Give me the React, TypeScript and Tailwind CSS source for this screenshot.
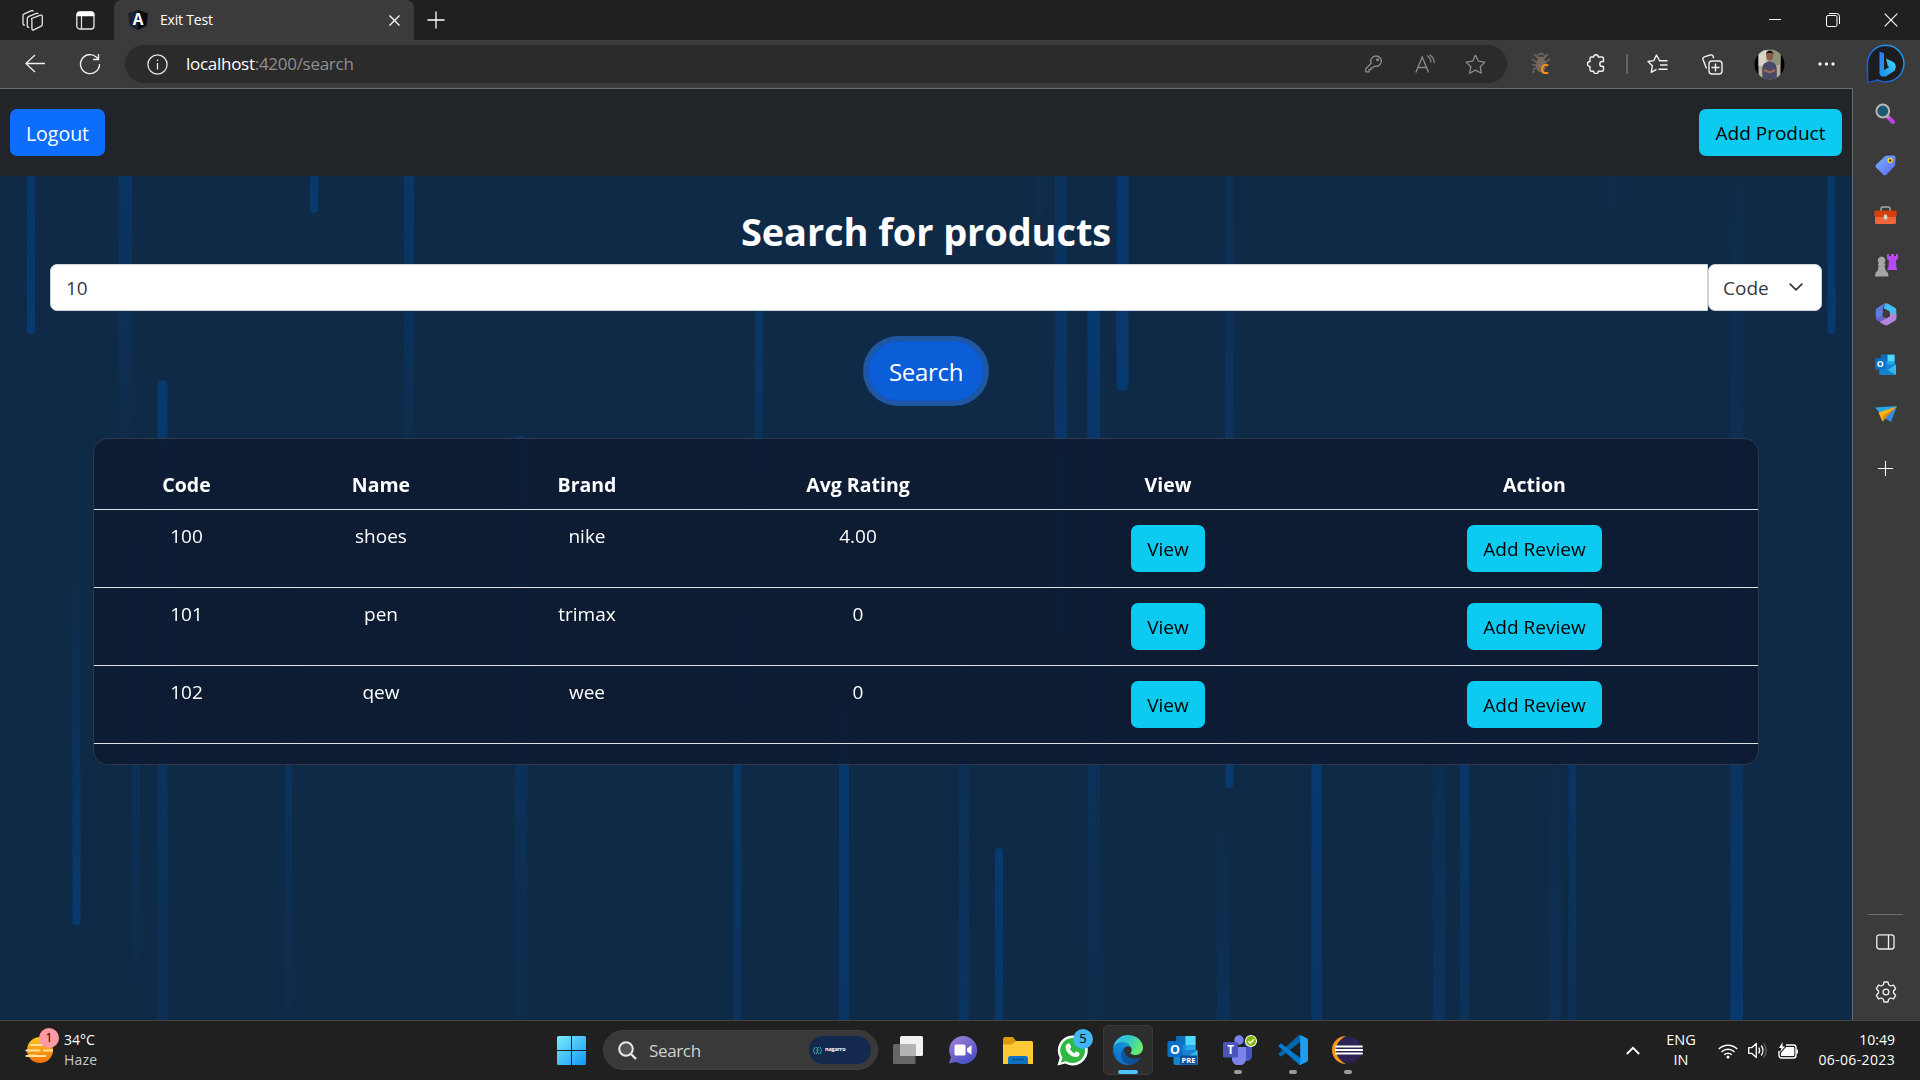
import React from "react";

type Stripe = { x: number; w: number; y1: number; y2: number; a: number; b: number };

/* Falling light streaks: a = opacity at the top end, b = opacity at the bottom end */
const stripes: Stripe[] = [
  { x: 27, w: 8, y1: 60, y2: 334, a: 0.6, b: 1 },
  { x: 118.5, w: 13.5, y1: 60, y2: 455, a: 1, b: 0 },
  { x: 310, w: 8, y1: 60, y2: 213, a: 0.7, b: 1 },
  { x: 404, w: 10, y1: 100, y2: 500, a: 1, b: 0 },
  { x: 157.5, w: 10, y1: 380, y2: 1090, a: 1, b: 0.2 },
  { x: 515, w: 12, y1: 436, y2: 1040, a: 0.9, b: 0.05 },
  { x: 755, w: 8, y1: 280, y2: 640, a: 0.9, b: 0 },
  { x: 1035, w: 9, y1: 100, y2: 260, a: 0.3, b: 0 },
  { x: 1054.5, w: 12.5, y1: 60, y2: 633, a: 0.35, b: 1 },
  { x: 1087.5, w: 12.5, y1: 285, y2: 1050, a: 1, b: 0.05 },
  { x: 1116.500, w: 12, y1: 40, y2: 391, a: 0.8, b: 1 },
  { x: 1225.500, w: 8, y1: 100, y2: 788, a: 0.2, b: 1 },
  { x: 1608, w: 10, y1: 100, y2: 215, a: 0.3, b: 0 },
  { x: 1730.500, w: 12.500, y1: 180, y2: 1100, a: 0.02, b: 1 },
  { x: 1827.500, w: 8, y1: 60, y2: 334, a: 0.6, b: 1 },
  { x: 72.500, w: 8, y1: 580, y2: 925, a: 0, b: 1 },
  { x: 132.500, w: 7.500, y1: 545, y2: 1000, a: 0.9, b: 0 },
  { x: 285, w: 7, y1: 545, y2: 1050, a: 1, b: 0 },
  { x: 733.500, w: 7.500, y1: 608, y2: 1200, a: 1, b: 0.3 },
  { x: 839, w: 10, y1: 705, y2: 1300, a: 1, b: 0.5 },
  { x: 959, w: 10, y1: 640, y2: 1060, a: 0.1, b: 0.7 },
  { x: 995, w: 8, y1: 848, y2: 1300, a: 1, b: 0.4 },
  { x: 1217, w: 12, y1: 820, y2: 1100, a: 0, b: 0.6 },
  { x: 1311.500, w: 10, y1: 752, y2: 1300, a: 1, b: 0.4 },
  { x: 1433, w: 12, y1: 700, y2: 1060, a: 0.15, b: 0.6 },
  { x: 1460, w: 9, y1: 640, y2: 1200, a: 0.95, b: 0.2 },
  { x: 1549.500, w: 12, y1: 750, y2: 1060, a: 0, b: 0.4 },
  { x: 1568.500, w: 7.500, y1: 560, y2: 1200, a: 0.9, b: 0.2 },
];

function Streaks() {
  return (
    <svg className="absolute inset-0 h-full w-full" viewBox="0 176 1852 844" preserveAspectRatio="none">
      <defs>
        {stripes.map((s, i) => (
          <linearGradient key={i} id={`st${i}`} x1="0" y1="0" x2="0" y2="1">
            <stop offset="0" stopColor="#073a70" stopOpacity={s.a} />
            <stop offset="1" stopColor="#073a70" stopOpacity={s.b} />
          </linearGradient>
        ))}
      </defs>
      {stripes.map((s, i) => (
        <rect key={i} x={s.x} y={s.y1} width={s.w} height={s.y2 - s.y1} rx={s.w / 2} fill={`url(#st${i})`} />
      ))}
    </svg>
  );
}

function TabStrip() {
  return (
    <div className="flex h-10 bg-[#202020]">
      <div className="flex w-[114px] items-center">
        <svg className="ml-[21px] h-[22px] w-[23px]" viewBox="0 0 23 22" fill="none" stroke="#e6e6e6" strokeWidth="1.3" strokeLinejoin="round">
          <path d="M10.5 9.5 19.5 6.2q1.8-.5 1.8 1.2v8.2q0 1-1 1.5l-7.6 3.7q-1.800.7-1.800-1.200v-8.200q0-1.200-.4-1.900z" />
          <path d="M8.200 18.200q-1.900.6-1.900-1.300V9.500q0-1.400 1.200-1.900l7.800-3.200q1.500-.5 1.700.8" />
          <path d="M4 15.900q-2 .6-2-1.300V6.500q0-1.200 1.200-1.700L10.500 1.700q1.500-.5 1.800.8" />
        </svg>
        <svg className="ml-8 h-[19px] w-[19px]" viewBox="0 0 19 19" fill="none">
          <rect x="0.8" y="0.8" width="17.2" height="17.2" rx="3" stroke="#e6e6e6" strokeWidth="1.3" />
          <path d="M.8 5.300V3.500a3 3 0 0 1 3-2.900h11.400a3 3 0 0 1 3 2.900v1.800z" fill="#fff" />
          <path d="M5.500 5v13" stroke="#e6e6e6" strokeWidth="1.2" />
        </svg>
      </div>
      <div className="flex w-[300px] items-center rounded-t-lg bg-[#3b3b3b]">
        <svg className="ml-[14px] h-5 w-5 overflow-visible" viewBox="0 0 20 20">
          <path d="M10 0 20 3.300 18.500 15.800 10 20z" fill="#050a14" />
          <path d="M10 0 0 3.300 1.500 15.800 10 20z" fill="#1c2130" />
          <text x="10" y="15.2" textAnchor="middle" fontSize="15.5" fontWeight="700" fill="#fff" fontFamily="Open Sans, sans-serif">A</text>
        </svg>
        <span className="ml-[12px] pb-[2px] text-[14px] tracking-[-0.2px] text-white">Exit Test</span>
        <svg className="mr-[14px] ml-auto h-[11px] w-[11px]" viewBox="0 0 11 11" stroke="#fff" strokeWidth="1.3">
          <path d="m.5.5 10 10m0-10-10 10" />
        </svg>
      </div>
      <svg className="mt-[11px] ml-[13px] h-[18px] w-[18px]" viewBox="0 0 18 18" stroke="#fff" strokeWidth="1.3">
        <path d="M9 .5v17M.5 9h17" />
      </svg>
      <div className="mr-[22px] ml-auto flex items-center gap-[44px] pb-[1px]">
        <svg className="h-[14px] w-[14px]" viewBox="0 0 14 14" stroke="#fff"><path d="M1 6.500h12" /></svg>
        <svg className="h-[14px] w-[14px]" viewBox="0 0 14 14" stroke="#fff" fill="none">
          <rect x=".5" y="2.5" width="10.5" height="11" rx="1.5" />
          <path d="M3 .5h7.500a3 3 0 0 1 3 3V11" />
        </svg>
        <svg className="h-[14px] w-[14px]" viewBox="0 0 14 14" stroke="#fff" strokeWidth="1.1"><path d="m.7.7 12.600 12.600m0-12.600L.7 13.300" /></svg>
      </div>
    </div>
  );
}

function BingIcon() {
  return (
    <svg className="h-[40px] w-[40px]" viewBox="0 0 40 40">
      <defs>
        <linearGradient id="bRing" x1="1" y1="0" x2="0" y2="1">
          <stop offset="0" stopColor="#1fa4f5" /><stop offset="1" stopColor="#1550d8" />
        </linearGradient>
        <linearGradient id="bB" x1="0" y1="0" x2="0" y2="1">
          <stop offset="0" stopColor="#2f7bf3" /><stop offset="1" stopColor="#2196ee" />
        </linearGradient>
        <linearGradient id="bC" x1="0" y1="1" x2="1" y2="0">
          <stop offset="0" stopColor="#1a86ee" /><stop offset="1" stopColor="#43dcf0" />
        </linearGradient>
      </defs>
      <path d="M20 1.200a18.300 18.300 0 1 1-8.500 34.700c-3.500 1.500-6.500 2.300-9.800 2.300L1.400 20A18.600 18.600 0 0 1 20 1.200z" fill="#1d1d1f" stroke="url(#bRing)" strokeWidth="1.5" />
      <path d="M13.500 7.500 18 9.300v17.200l-4.500 3.200z" fill="url(#bB)" />
      <path d="M20 14.500l6.700 3.200a5.500 5.500 0 0 1 3 5c0 2.500-1 4.200-3 5.300l-6.700 4.200c-3.500 1.400-6.500-.3-6.500-3.500l9.800-5.700-1.500-.8z" fill="url(#bC)" />
    </svg>
  );
}

function Toolbar() {
  return (
    <div className="flex h-12 items-center bg-[#3b3b3b]">
      <svg className="ml-[25px] h-[20px] w-[20px]" viewBox="0 0 20 20" fill="none" stroke="#f0f0f0" strokeWidth="1.3">
        <path d="M10 1 .9 9.500 10 18M1 9.500h19" />
      </svg>
      <svg className="ml-[34px] h-[22px] w-[22px]" viewBox="0 0 22 22" fill="none" stroke="#f0f0f0" strokeWidth="1.4">
        <path d="M20.500 11a9.500 9.500 0 1 1-3-6.800L19.500 6.300M19.500 1v5.500H14" />
      </svg>
      <div className="ml-6 flex h-[38px] w-[1382px] items-center rounded-full bg-[#2b2b2b]">
        <svg className="ml-[22px] h-[21px] w-[21px]" viewBox="0 0 21 21" fill="none" stroke="#e6e6e6" strokeWidth="1.3">
          <circle cx="10.5" cy="10.5" r="9.600" /><path d="M10.500 9v6.500M10.500 5.500v1.600" />
        </svg>
        <span className="ml-[18px] text-[17px] tracking-[-0.28px] whitespace-nowrap text-[#8f8f8f]"><span className="text-white">localhost</span>:4200/search</span>
        <svg className="ml-auto h-[18px] w-[17px]" viewBox="0 0 17 18" fill="none" stroke="#8c8c8c" strokeWidth="1.3" strokeLinejoin="round">
          <path d="M11 1a5.200 5.200 0 1 1-1.600 10.100L7.700 12.800H6v1.900H4v2.200H.8v-3.100l5.400-5.500A5.200 5.200 0 0 1 11 1z" /><circle cx="12.6" cy="4.8" r=".9" />
        </svg>
        <svg className="ml-[33px] h-[20px] w-[20px]" viewBox="0 0 20 20" fill="none" stroke="#8c8c8c" strokeWidth="1.3">
          <path d="M.8 18.500 7.200 3l6.400 15.500M3 13.500h8.500M12 1.500q4 2.500 4 7M14.500.7q4.800 3 4.800 8.300" />
        </svg>
        <svg className="mr-[21px] ml-[30px] h-[21px] w-[21px]" viewBox="0 0 21 21" fill="none" stroke="#8c8c8c" strokeWidth="1.3" strokeLinejoin="round">
          <path d="m10.500 1.300 2.900 5.900 6.500.9-4.700 4.600 1.100 6.500-5.800-3.100-5.800 3.100 1.100-6.500L1.100 8.100l6.500-.9z" />
        </svg>
      </div>
      <svg className="ml-[24px] h-[22px] w-[20px] overflow-visible" viewBox="0 0 20 22" fill="none" stroke="#75695e" strokeWidth="1.4">
        <path d="M6 4.500a4 4 0 0 1 8 0zM3 1l3 3M17 1l-3 3M1 6l4 3h10l4-3M1 12h4M2 20l1-4 3-2" />
        <ellipse cx="10" cy="12" rx="5" ry="7.500" fill="#75695e" stroke="none" />
        <text x="9" y="21" fontSize="14" fontWeight="700" fill="#f7941d" stroke="#3b3b3b" strokeWidth=".5" paintOrder="stroke" fontFamily="Open Sans, sans-serif">C</text>
      </svg>
      <svg className="ml-[35px] h-[20px] w-[20px]" viewBox="0 0 20 20" fill="none" stroke="#f0f0f0" strokeWidth="1.4" strokeLinejoin="round">
        <path d="M4 4.500q0-1.500 1.500-1.500h2.200a2.300 2.300 0 0 1 4.600 0H16q1.500 0 1.500 1.500v3h-1.200a2.500 2.500 0 0 0 0 5h1.200v3.300q0 1.500-1.500 1.500h-3.700a2.300 2.300 0 0 1-4.600 0H5.500Q4 17.300 4 15.800v-3.300a2.500 2.500 0 0 1 0-5z" />
      </svg>
      <div className="ml-[20px] h-5 w-[2px] bg-[#666]" />
      <svg className="ml-[19px] h-[20px] w-[21px]" viewBox="0 0 21 20" fill="none" stroke="#f0f0f0" strokeWidth="1.4" strokeLinejoin="round">
        <path d="M13 6.500h-.5L9.500 1 6.800 6.600 1 7.500l4.300 4.300-1 6.500 5.200-2.900M12 6.800h8.500M13 11h7.500M11.500 15.300h9" />
      </svg>
      <svg className="ml-[34px] h-[21px] w-[21px]" viewBox="0 0 21 21" fill="none" stroke="#f0f0f0" strokeWidth="1.4">
        <path d="M4.500 14.500 1 5.500q-.5-2 1.300-2.700L8 1q2-.5 3 1l.7 2.200" /><rect x="7" y="7" width="13" height="13" rx="3" fill="#3b3b3b" /><path d="M13.500 9.500v8M9.500 13.500h8" />
      </svg>
      <svg className="ml-[31px] h-[31px] w-[31px]" viewBox="0 0 31 31">
        <clipPath id="av"><circle cx="15.5" cy="15.5" r="15" /></clipPath>
        <g clipPath="url(#av)">
          <path d="M0 0h31v31H0z" fill="#000" /><path d="M4.500 0h22v31h-22z" fill="#b9ad9c" /><path d="M17 0h9.500v16H17z" fill="#8e9379" /><path d="M4.500 0H12v17H4.500z" fill="#d9d2c6" />
          <path d="M8.500 31c0-7-1.500-15 2.500-17l4.500-2 4.500 2c4 2 2.500 10 3 17z" fill="#4b4a66" />
          <ellipse cx="15.7" cy="7" rx="3.300" ry="4.600" fill="#8d5c44" /><path d="M12 6c0-6 7.500-6 7.500 0l-1.500-2h-4.500z" fill="#17120f" />
          <path d="m10 21 6 2.500 5-2.500" stroke="#a06c50" strokeWidth="2" fill="none" />
        </g>
      </svg>
      <svg className="ml-[33px] h-[4px] w-[17px]" viewBox="0 0 17 4" fill="#f0f0f0"><circle cx="2" cy="2" r="1.7" /><circle cx="8.5" cy="2" r="1.7" /><circle cx="15" cy="2" r="1.7" /></svg>
      <div className="ml-[31px]"><BingIcon /></div>
    </div>
  );
}

const products = [
  { code: "100", name: "shoes", brand: "nike", rating: "4.00" },
  { code: "101", name: "pen", brand: "trimax", rating: "0" },
  { code: "102", name: "qew", brand: "wee", rating: "0" },
];

const gridCols = "grid grid-cols-[185px_204px_208px_334px_286px_447px] text-center";
const infoButton = "h-[47px] rounded-[7px] bg-[#0dcaf0] pt-[2px] text-[19px] text-black";

function Page() {
  return (
    <div className="flex w-[1852px] flex-col border-t border-[#6b6b6b]">
      <nav className="flex h-[87px] items-center justify-between bg-[#212529] px-[10px]">
        <button className="h-[47px] w-[95px] rounded-[7px] bg-[#0d6efd] pt-[2px] text-[19.5px] text-white">Logout</button>
        <button className={`${infoButton} w-[143px]`}>Add Product</button>
      </nav>
      <main className="relative h-[844px] overflow-hidden bg-[#0f2a47]">
        <Streaks />
        <div className="relative flex flex-col items-center">
          <h1 className="mt-[31px] h-12 text-[38px] leading-[48px] font-bold tracking-[-0.1px] text-white">Search for products</h1>
          <div className="mt-[9px] flex w-[1772px] self-start pl-[50px]">
            <div className="flex h-[47px] w-[1658px] shrink-0 items-center rounded-l-[7px] border border-[#ced4da] bg-white pt-[2px] pl-[15px] text-[19px] text-[#343a40]">10</div>
            <div className="flex h-[47px] w-[114px] shrink-0 items-center rounded-[7px] border border-[#ced4da] bg-white pl-[14px] text-[19px] text-[#343a40]">
              <span className="pt-[2px]">Code</span>
              <svg className="mb-[1px] ml-[20px] h-[8px] w-[14px]" viewBox="0 0 14 8" fill="none" stroke="#343a40" strokeWidth="1.8" strokeLinecap="round" strokeLinejoin="round"><path d="m1.200 1.200 5.800 5.600 5.800-5.600" /></svg>
            </div>
          </div>
          <button className="mt-[30px] h-[60px] w-[116px] rounded-full border border-[#0a58ca] bg-[#0b5ed7] pt-[1px] text-[24px] tracking-[-0.3px] text-white ring-[5px] ring-[#3184fd]/50">Search</button>
          <section className="mt-[37px] h-[327px] w-[1666px] rounded-[15px] border border-white/[0.125] bg-[#0e1a30]/85 text-[19px] text-white backdrop-blur-[5px]">
            <div className={`${gridCols} h-[71px] items-end border-b border-[#dee2e6] pb-[10px] text-[19.5px] font-bold`}>
              <span>Code</span><span>Name</span><span>Brand</span><span>Avg Rating</span><span>View</span><span>Action</span>
            </div>
            {products.map((p) => (
              <div key={p.code} className={`${gridCols} h-[78px] items-start border-b border-[#dee2e6] pt-[12px]`}>
                <span>{p.code}</span><span>{p.name}</span><span>{p.brand}</span><span>{p.rating}</span>
                <span className="pt-[3px]"><button className={`${infoButton} w-[74px]`}>View</button></span>
                <span className="pt-[3px]"><button className={`${infoButton} w-[135px]`}>Add Review</button></span>
              </div>
            ))}
          </section>
        </div>
      </main>
    </div>
  );
}

function OutlookIcon({ pre }: { pre?: boolean }) {
  return (
    <svg className={pre ? "h-[30px] w-[31px]" : "h-[21px] w-[21px]"} viewBox="0 0 30 30">
      <path d="M9 1h18q1 0 1 1v24H9z" fill="#1490df" /><path d="M9 1h9v9H9z" fill="#0f6cbd" /><path d="M18 1h10v9H18z" fill="#50d9ff" /><path d="M18 10h10v8H18z" fill="#28a8ea" />
      <path d="M6 15h24v13q0 2-2 2H8q-2 0-2-2z" fill="#1683d0" /><path d="m30 15-12 8 12 7z" fill="#35b8f1" />
      <rect x="0" y="6" width="15" height="16" rx="1.5" fill="#0a6fc7" />
      <text x="7.5" y="18.7" textAnchor="middle" fontSize="12.5" fontWeight="700" fill="#fff" fontFamily="Open Sans, sans-serif">O</text>
      {pre && <><rect x="12.5" y="20.5" width="17" height="9" fill="#0a4f97" /><text x="21" y="28" textAnchor="middle" fontSize="7.5" fontWeight="700" fill="#fff" fontFamily="Open Sans, sans-serif">PRE</text></>}
    </svg>
  );
}

function Sidebar() {
  return (
    <aside className="flex w-[68px] flex-col items-center border-l border-[#6b6b6b] bg-[#3b3b3b] pr-[2px]">
      <svg className="mt-[15px] h-[22px] w-[21px]" viewBox="0 0 21 22">
        <path d="m13 14 5 5" stroke="#c23df0" strokeWidth="4" strokeLinecap="round" /><path d="m12 13 2 2" stroke="#999" strokeWidth="2.5" />
        <circle cx="7.8" cy="8" r="6.400" fill="#1b5875" stroke="#b8b5b2" strokeWidth="2" />
      </svg>
      <svg className="mt-[30px] h-[21px] w-[21px]" viewBox="0 0 21 21">
        <defs><linearGradient id="tg" x1="0" y1="0" x2="1" y2="1"><stop offset="0" stopColor="#76b7ff" /><stop offset="1" stopColor="#5c63f5" /></linearGradient></defs>
        <path d="m11.500.7 7-.2q2 0 2 2l-.3 7q0 1-.8 1.800l-8.200 8.500q-1.400 1.200-2.800 0L1 12.500q-1-1.400 0-2.800L10 1.300q.7-.6 1.500-.6z" fill="url(#tg)" />
        <circle cx="15.2" cy="5.6" r="2" fill="#333" stroke="#f5cf1b" strokeWidth="1.5" />
      </svg>
      <svg className="mt-[30px] h-[18px] w-[23px]" viewBox="0 0 23 18">
        <path d="M7 5V2.500q0-1.500 1.500-1.500h6Q16 1 16 2.500V5" fill="none" stroke="#aaa" strokeWidth="1.5" />
        <rect x="1" y="9" width="21" height="9" rx="1.5" fill="#f0653a" /><rect x=".3" y="4.5" width="22.4" height="6.500" rx="1.3" fill="#d3400f" /><rect x="9.7" y="8.5" width="3.6" height="5" rx="1.5" fill="#d5cfcb" />
      </svg>
      <svg className="mt-[29px] h-[24px] w-[24px]" viewBox="0 0 24 24">
        <path d="M13 1h2v2h2V1h3v2h2V1h2v5l-2 1.500.3 6.500 1.200 3H13l1.500-3 .3-6.500L13 6z" fill="#b44af3" />
        <path d="M7.500 3.500a4 4 0 0 1 2.800 6.800l1.200 1-.8 1.500c0 3 .8 5 3.300 7.200l.5 3.500H1l.5-3.500c2.500-2.200 3-4.200 3-7.200L3.700 11.300l1.200-1a4 4 0 0 1 2.600-6.800z" fill="#a5a5a5" />
      </svg>
      <svg className="mt-[26px] h-[23px] w-[22px]" viewBox="0 0 22 23">
        <path d="M10.500.3Q12 0 13.500 1L20 4.700q1.300.8 1.300 2.300v8.500l-6.500-3.500V8.500L8.500 5z" fill="#45bdf0" />
        <path d="M11 .2 8.800 2.500q-1 1-1 2.500v8.500L2.500 17.500Q.8 16.500.8 14.800V7.500Q.8 5.800 2.200 5L9 .8q1-.7 2-.6z" fill="#5a7ee0" />
        <path d="m7.800 12.500 4 2.500-5.500 4.500-3.800-2Q.8 16.500.8 14.800V13q2 2 4.500 1z" fill="#6a5fc4" />
        <path d="M21.300 11v4.500q0 1.500-1.300 2.300L12.700 22q-1.500.8-3 0l-5-2.800 10.100-6V9.500q3.500 2.800 6.500 1.500z" fill="#b683de" />
        <path d="m11 8 3.800 2.200v3L11 15.300l-3.200-1.800V9.800z" fill="#3b3b3b" />
      </svg>
      <div className="mt-[28px]"><OutlookIcon /></div>
      <svg className="mt-[31px] h-[17px] w-[22px]" viewBox="0 0 22 17">
        <path d="M0 1.500 22 0 9 8 5 7z" fill="#27a6e8" /><path d="m3.500 6.500 18.500-6L7.500 15.500z" fill="#f9b715" /><path d="M22 .3 16 16l-6.500-4z" fill="#2f8bea" /><path d="M22 .3 7.500 15.500 8 10z" fill="#dd8b10" />
      </svg>
      <svg className="mt-[38px] h-[15px] w-[15px]" viewBox="0 0 15 15" stroke="#fff" strokeWidth="1.1"><path d="M7.500 0v15M0 7.500h15" /></svg>
      <div className="mt-auto h-px w-[35px] bg-[#6e6e6e]" />
      <svg className="mt-[19px] h-[16px] w-[19px]" viewBox="0 0 19 16" fill="none" stroke="#f0f0f0" strokeWidth="1.3"><rect x=".8" y=".8" width="17.2" height="14.2" rx="2.5" /><path d="M12.500 1v14" /></svg>
      <svg className="mt-[31px] mb-[17px] h-[22px] w-[22px]" viewBox="0 0 22 22" fill="none" stroke="#f0f0f0" strokeWidth="1.3" strokeLinejoin="round">
        <path d="M9 1h4l.7 2.800 2 1.200 2.800-.9 2.100 3.600L18.500 10v2l2.100 2.300-2.100 3.600-2.800-.9-2 1.200L13 21H9l-.7-2.800-2-1.200-2.800.9-2.100-3.600L3.500 12v-2L1.400 7.700l2.100-3.600 2.800.9 2-1.200z" /><circle cx="11" cy="11" r="2.900" />
      </svg>
    </aside>
  );
}

function EdgeIcon() {
  return (
    <svg className="h-[30px] w-[30px]" viewBox="0 0 256 256">
      <defs>
        <linearGradient id="e1" x1="0" y1="0" x2="1" y2="0"><stop offset="0" stopColor="#0c59a4" /><stop offset="1" stopColor="#114a8b" /></linearGradient>
        <linearGradient id="e2" x1="1" y1="0" x2="0.3" y2="1"><stop offset="0" stopColor="#1b9de2" /><stop offset="1" stopColor="#0a6cc4" /></linearGradient>
        <linearGradient id="e3" x1="0" y1="0" x2="1" y2="0.4"><stop offset="0" stopColor="#35c1f1" /><stop offset="0.5" stopColor="#2fc6cf" /><stop offset="1" stopColor="#66eb6e" /></linearGradient>
      </defs>
      <path fill="url(#e1)" d="M231.100 190.500c-3.400 1.800-6.900 3.400-10.500 4.700a101.900 101.900 0 0 1-35.900 6.500c-47.300 0-88.500-32.500-88.500-74.300a31.500 31.500 0 0 1 16.400-27.300c-42.800 1.800-53.800 46.400-53.800 72.500 0 74 68.100 81.400 82.800 81.400 7.900 0 19.800-2.300 27-4.600l1.300-.4a128.300 128.300 0 0 0 66.600-52.800 4 4 0 0 0-5.400-5.700z" />
      <path fill="url(#e2)" d="M105.700 241.400a79.200 79.200 0 0 1-22.700-21.300 80.700 80.700 0 0 1 29.500-120c3.200-1.500 8.500-4.100 15.600-4a32.400 32.400 0 0 1 25.700 13 31.900 31.900 0 0 1 6.300 18.700c0-.2 24.500-79.600-80-79.600-43.900 0-80 41.600-80 78.200a130.200 130.200 0 0 0 12.100 56 128 128 0 0 0 156.400 67 75.500 75.500 0 0 1-62.800-8z" />
      <path fill="url(#e3)" d="M152.300 148.900c-.8 1-3.300 2.500-3.300 5.700 0 2.600 1.700 5.200 4.800 7.300 14.400 10 41.500 8.700 41.500 8.700a59.600 59.600 0 0 0 30.300-8.300 61.400 61.400 0 0 0 30.400-52.900c.3-22.400-8-37.300-11.300-43.900C223.600 23.900 177.700 0 127.700 0A128 128 0 0 0 0 126.200c.5-36.500 36.800-66 80-66 3.500 0 23.500.3 42 10.100 16.300 8.600 24.900 18.900 30.800 29.200 6.200 10.700 7.300 24.100 7.300 29.500 0 5.300-2.700 13.300-7.800 19.900z" />
    </svg>
  );
}

function AppSlot({ children, mark }: { children: React.ReactNode; mark?: "active" | "open" }) {
  return (
    <div className="flex w-[55px] justify-center">
      <div className={`relative mt-[4px] flex h-[50px] w-[50px] items-center justify-center rounded-[5px] ${mark === "active" ? "border border-[#3a3a3a] bg-[#2e2e2e]" : ""}`}>
        {children}
        {mark && <div className={`absolute left-1/2 h-[4px] -translate-x-1/2 rounded-full ${mark === "active" ? "bottom-0 w-5 bg-[#4cc2ff]" : "bottom-px w-2 bg-[#9a9a9a]"}`} />}
      </div>
    </div>
  );
}

function Taskbar() {
  return (
    <footer className="flex h-[60px] border-t border-[#444646] bg-[#202020]">
      <div className="flex w-[557px] items-center">
        <div className="relative ml-[24px] h-[42px] w-[36px]">
          <svg className="absolute top-[6px] left-0 h-[28px] w-[29px]" viewBox="0 0 29 28">
            <defs><linearGradient id="sun" x1="0" y1="0" x2="0" y2="1"><stop offset="0" stopColor="#fcc81a" /><stop offset="1" stopColor="#f0720c" /></linearGradient></defs>
            <circle cx="16" cy="14" r="13" fill="url(#sun)" />
            <path d="M7 9h12M22 9h4M2.500 14.500h13M20 14.500h8M6 19.500h6M2.500 20h19" stroke="#fbdf9f" strokeWidth="2.2" strokeLinecap="round" />
          </svg>
          <span className="absolute -top-[2px] left-[15px] flex h-5 w-5 items-center justify-center rounded-full bg-[#ff99a4] text-[12px] text-black">1</span>
        </div>
        <div className="ml-[4px] flex flex-col pb-[2px] text-[14px] leading-[20px]"><span className="text-white">34°C</span><span className="tracking-[0.2px] text-[#c8c8c8]">Haze</span></div>
      </div>
      <svg className="mt-[15px] h-[30px] w-[30px]" viewBox="0 0 30 30">
        <defs><linearGradient id="win" gradientUnits="userSpaceOnUse" x1="0" y1="0" x2="30" y2="30"><stop offset="0" stopColor="#7cebff" /><stop offset="1" stopColor="#0c95f5" /></linearGradient></defs>
        <path d="M1.500 0H14v14H0V1.500Q0 0 1.500 0zM15 0h12.500Q29 0 29 1.500V14H15zM0 15h14v14H1.500Q0 29 0 27.500zM15 15h14v12.500q0 1.500-1.500 1.500H15z" fill="url(#win)" />
      </svg>
      <div className="mt-[9px] ml-[16px] flex h-[40px] w-[275px] items-center rounded-full border border-[#404040] bg-[#393939]">
        <svg className="ml-[14px] h-[19px] w-[19px]" viewBox="0 0 19 19" fill="none" stroke="#e8e8e8" strokeWidth="2"><circle cx="8" cy="8" r="6.800" fill="#555" /><path d="m13 13 5 5" strokeWidth="2.4" /></svg>
        <span className="ml-[12px] pt-[1px] text-[17px] tracking-[-0.35px] text-[#d0d0d0]">Search</span>
        <div className="mr-[6px] ml-auto flex h-7 w-[62px] items-center rounded-full bg-[#13294d] pl-[3px]">
          <svg className="h-[9px] w-[11px]" viewBox="0 0 11 9" fill="none" stroke="#3fae9d" strokeWidth="1"><path d="M3 1Q0 4.500 3 8M8 1q3 3.500 0 7M4 1q4 3 0 7M7 1Q3 4 7 8" /></svg>
          <span className="ml-[2px] text-[5.5px] leading-none font-bold tracking-[-0.2px] text-white">nagarro</span>
        </div>
      </div>
      <div className="ml-[2px] flex">
        <AppSlot>
          <svg className="h-[28px] w-[30px]" viewBox="0 0 30 28"><rect x="7" y="0" width="23" height="20" rx="1.5" fill="#f2f2f2" /><rect x="0" y="8" width="22.5" height="20" rx="1.5" fill="#6e6e6e" fillOpacity=".9" /><path d="M7 8h15.500v12H7z" fill="#b4b4b4" /></svg>
        </AppSlot>
        <AppSlot>
          <svg className="h-[28px] w-[28px]" viewBox="0 0 28 28">
            <defs><linearGradient id="chat" x1="0" y1="0" x2="0.6" y2="1"><stop offset="0" stopColor="#a582d4" /><stop offset="1" stopColor="#4a50c8" /></linearGradient></defs>
            <path d="M14 0a14 14 0 1 1-7 26L0 27.500 2 21A14 14 0 0 1 14 0z" fill="url(#chat)" /><rect x="5.500" y="8.500" width="11" height="11" rx="1.5" fill="#fff" /><path d="m18 12.500 4.500-3.300v9.600L18 15.500z" fill="#fff" />
          </svg>
        </AppSlot>
        <AppSlot>
          <svg className="h-[27px] w-[30px]" viewBox="0 0 30 27"><path d="M0 2q0-2 2-2h8l3 4h-2v5H0z" fill="#dc9a08" /><path d="M12 4h16.500Q30 4 30 5.500V27H0V7.500h9z" fill="#fdc935" /><path d="M5 27v-5.500Q5 19 7.500 19h15q2.500 0 2.500 2.500V27z" fill="#0d74c4" /><path d="M9 22.500h12" stroke="#0a4f90" strokeWidth="1.5" /></svg>
        </AppSlot>
        <AppSlot>
          <div className="relative flex h-[31px] w-[31px] items-center justify-center text-white">
            <svg className="absolute inset-0 h-[31px] w-[31px]" viewBox="0 0 31 31"><path d="M15.500.5a15 15 0 1 1-7.200 28L.5 30.500l2.200-7.700A15 15 0 0 1 15.500.5z" fill="#fff" /><path d="M15.500 3a12.500 12.500 0 1 1-6.400 23.200L4 27.500l1.400-5A12.500 12.500 0 0 1 15.500 3z" fill="#2fb943" />
              <path d="M10.800 8.500h2l1.400 3.500-1.200 1.900c1 2 2.500 3.300 4.500 4.100l1.700-1.700 3.300 1.600c.5 3-2 4.200-4 4.100-5-.5-9.500-5-9.900-9.300 0-1.700.8-3.500 2.200-4.200z" fill="#fff" /></svg>
            <span className="absolute -top-[6px] left-[16px] flex h-[20px] w-[20px] items-center justify-center rounded-full bg-[#3fb6f5] text-[13px] text-black">5</span>
          </div>
        </AppSlot>
        <AppSlot mark="active"><EdgeIcon /></AppSlot>
        <AppSlot><OutlookIcon pre /></AppSlot>
        <AppSlot mark="open">
          <svg className="h-[30px] w-[34px] translate-x-[2px]" viewBox="0 0 34 30">
            <circle cx="25" cy="8" r="3.500" fill="#5059c9" /><path d="M20 12h9v9a5 5 0 0 1-9 3z" fill="#4a52bd" />
            <circle cx="16" cy="5" r="4.700" fill="#7b83eb" /><path d="M9 12h14v10a7 7 0 0 1-14 3z" fill="#7b83eb" />
            <rect x="0" y="7" width="15" height="15.500" rx="1.5" fill="#4b53bc" /><text x="7.5" y="19" textAnchor="middle" fontSize="11.5" fontWeight="700" fill="#fff" fontFamily="Open Sans, sans-serif">T</text>
            <circle cx="28" cy="6" r="6" fill="#fff" /><circle cx="28" cy="6" r="5" fill="#7fba00" /><path d="m25.300 6 2 2.100 3.500-3.900" stroke="#fff" strokeWidth="1.5" fill="none" />
          </svg>
        </AppSlot>
        <AppSlot mark="open">
          <svg className="h-[30px] w-[30px]" viewBox="0 0 100 100">
            <path d="M96 11 75 1q-4-1-7 1L2 62q-2 2 0 4l6 5q2 1.500 4 0L91 11q5-2 5 3z" fill="#0065a9" /><path d="M96 89 75 99q-4 1-7-2L2 38q-2-2 0-4l6-5q2-1.500 4 0l79 60q5 2 5-3z" fill="#007acc" /><path d="M75 99q-4 1-7-2 4 3 6-2V5q-2-5-6-2 3-3 7-2l21 10q4 2 4 6v66q0 4-4 6z" fill="#1f9cf0" />
          </svg>
        </AppSlot>
        <AppSlot mark="open">
          <svg className="h-[28px] w-[31px]" viewBox="0 0 31 28">
            <path d="M14 0A14 14 0 0 0 14 28 15.500 15.500 0 0 1 14 0z" fill="#f7941e" /><circle cx="17" cy="14" r="13" fill="#2c2255" />
            <path d="M3.300 10.500h27.400M3 14h28M3.300 17.500h27.400" stroke="#fff" strokeWidth="1.9" />
          </svg>
        </AppSlot>
      </div>
      <div className="mr-[25px] ml-auto flex items-center text-[14px] leading-[20px] text-white">
        <svg className="h-[9px] w-[14px]" viewBox="0 0 14 9" fill="none" stroke="#fff" strokeWidth="1.8"><path d="m.8 8 6.200-6.200L13.200 8" /></svg>
        <div className="ml-[26px] flex w-[30px] flex-col items-center pb-[1px] text-[14.5px]"><span>ENG</span><span>IN</span></div>
        <svg className="ml-[22px] h-[16px] w-[20px]" viewBox="0 0 20 16" fill="none" stroke="#fff" strokeWidth="1.5"><path d="M.8 6a13 13 0 0 1 18.400 0M3.500 9a9.200 9.200 0 0 1 13 0M6.300 11.800a5.300 5.300 0 0 1 7.400 0" /><circle cx="10" cy="14" r="1.500" fill="#fff" stroke="none" /></svg>
        <svg className="ml-[10px] h-[17px] w-[20px]" viewBox="0 0 20 17" fill="none" stroke="#fff" strokeWidth="1.3" strokeLinejoin="round"><path d="M.7 5.700h3L8.300 1.500v14L3.700 11.300h-3zM10.700 5.500q2 3 0 6M13.200 3.500q3.600 5 0 10" /><path d="M15.800 1.500q4.700 7 0 14" stroke="#666" /></svg>
        <svg className="ml-[10px] h-[17px] w-[21px]" viewBox="0 0 21 17"><path d="M8 3h7.500A2.500 2.500 0 0 1 18 5.500v8a2.500 2.500 0 0 1-2.500 2.500h-12A2.500 2.500 0 0 1 1 13.500V9" fill="none" stroke="#fff" strokeWidth="1.4" /><path d="M8 5h7.500q.8 0 .8.800v7.400q0 .8-.8.800H3V11zM18.500 7.500h1.500v4h-1.500z" fill="#fff" /><path d="M4.500 0 1 6h2.500L2 10.500 7 4.500H4.500z" fill="#fff" /></svg>
        <div className="ml-[18px] flex w-[78px] flex-col items-end pb-[2px] whitespace-nowrap"><span>10:49</span><span className="tracking-[0.35px]">06-06-2023</span></div>
      </div>
    </footer>
  );
}

export default function App() {
  return (
    <div className="flex h-[1080px] w-[1920px] flex-col overflow-hidden font-['Open_Sans','Noto_Sans',sans-serif]">
      <TabStrip />
      <Toolbar />
      <div className="flex h-[932px] bg-[#3b3b3b]"><Page /><Sidebar /></div>
      <Taskbar />
    </div>
  );
}
